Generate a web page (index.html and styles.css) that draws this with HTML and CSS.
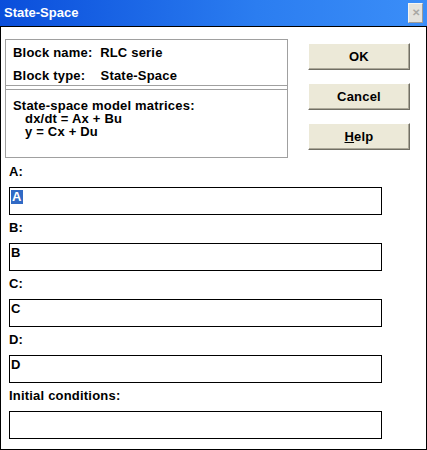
FILE: index.html
```html
<!DOCTYPE html>
<html lang="en">
<head>
    <meta charset="UTF-8">
    <meta name="viewport" content="width=device-width, initial-scale=1.0">
    <title>State-Space</title>
    <link rel="stylesheet" href="styles.css">
</head>
<body>
    <div class="window">
        <div class="titlebar">
            <span class="title">State-Space</span>
            <span class="close">&#x2715;</span>
        </div>

        <div class="dialog">
            <div class="top-row">
                <div class="info-box">
                    <div class="info-head">
                        <p>Block name:&nbsp; RLC serie</p>
                        <p>Block type:&nbsp;&nbsp;&nbsp; State-Space</p>
                    </div>
                    <div class="info-desc">
                        <p>State-space model matrices:</p>
                        <p class="indent">dx/dt = Ax + Bu</p>
                        <p class="indent">y = Cx + Du</p>
                    </div>
                </div>

                <div class="buttons">
                    <button class="btn">OK</button>
                    <button class="btn">Cancel</button>
                    <button class="btn"><u>H</u>elp</button>
                </div>
            </div>

            <div class="fields">
                <label class="field-label">A:</label>
                <div class="field"><span class="selected">A</span></div>

                <label class="field-label">B:</label>
                <div class="field">B</div>

                <label class="field-label">C:</label>
                <div class="field">C</div>

                <label class="field-label">D:</label>
                <div class="field">D</div>

                <label class="field-label">Initial conditions:</label>
                <div class="field"></div>
            </div>
        </div>
    </div>
</body>
</html>
```

FILE: styles.css
```css
body {
    margin: 0;
    font-family: 'Liberation Sans', Arial, sans-serif;
    font-size: 13px;
    font-weight: bold;
    letter-spacing: 0.2px;
    color: #000;
    background-color: #fff;
}

p {
    margin: 0;
}

.window {
    width: 427px;
    height: 450px;
    box-sizing: border-box;
}

.titlebar {
    height: 27px;
    box-sizing: border-box;
    display: flex;
    justify-content: space-between;
    align-items: flex-start;
    padding: 0 4px 0 4px;
    background: linear-gradient(to right, #0a4edb, #2b7df0 60%, #3b8ef8);
    border-bottom: 1px solid #000;
}

.title {
    color: #fff;
    font-size: 13px;
    line-height: 26px;
    letter-spacing: 0;
}

.close {
    margin-top: 3px;
    width: 15px;
    height: 20px;
    box-sizing: border-box;
    background-color: #e4e2dc;
    border: 1px solid #f6f5f1;
    border-right-color: #9d9c98;
    border-bottom-color: #9d9c98;
    color: #a9a8a4;
    font-size: 10px;
    line-height: 18px;
    text-align: center;
    letter-spacing: 0;
}

.dialog {
    height: 423px;
    box-sizing: border-box;
    border: 1px solid #000;
    border-top: none;
    padding: 12px 0 0 4px;
}

.top-row {
    display: flex;
    align-items: flex-start;
}

.info-box {
    width: 283px;
    height: 119px;
    box-sizing: border-box;
    border: 1px solid #a0a0a0;
}

.info-head {
    height: 46px;
    box-sizing: border-box;
    padding: 5px 0 0 7px;
    line-height: 15px;
    border-bottom: 1px solid #a0a0a0;
}

.info-head p + p {
    margin-top: 8px;
}

.info-desc {
    margin-top: 3px;
    padding: 9px 0 0 7px;
    line-height: 13px;
    border-top: 1px solid #a0a0a0;
}

.indent {
    padding-left: 12px;
}

.buttons {
    display: flex;
    flex-direction: column;
    gap: 13px;
    margin: 4px 0 0 20px;
}

.btn {
    width: 102px;
    height: 27px;
    padding: 0;
    font-family: inherit;
    font-size: 13px;
    font-weight: bold;
    letter-spacing: 0.2px;
    color: #000;
    background-color: #ece9d8;
    border: 1px solid #fff;
    border-right-color: #716f64;
    border-bottom-color: #716f64;
    box-shadow: inset -1px -1px 0 #aca899;
}

.fields {
    display: flex;
    flex-direction: column;
    margin: 6px 0 0 4px;
}

.field-label {
    line-height: 15px;
    margin-bottom: 8px;
}

.field {
    width: 373px;
    height: 28px;
    box-sizing: border-box;
    margin-bottom: 5px;
    padding: 2px 1px 0;
    line-height: 14px;
    border: 1px solid #000;
}

.selected {
    display: inline-block;
    background-color: #316ac5;
    color: #fff;
    padding: 0 1px;
}
```
